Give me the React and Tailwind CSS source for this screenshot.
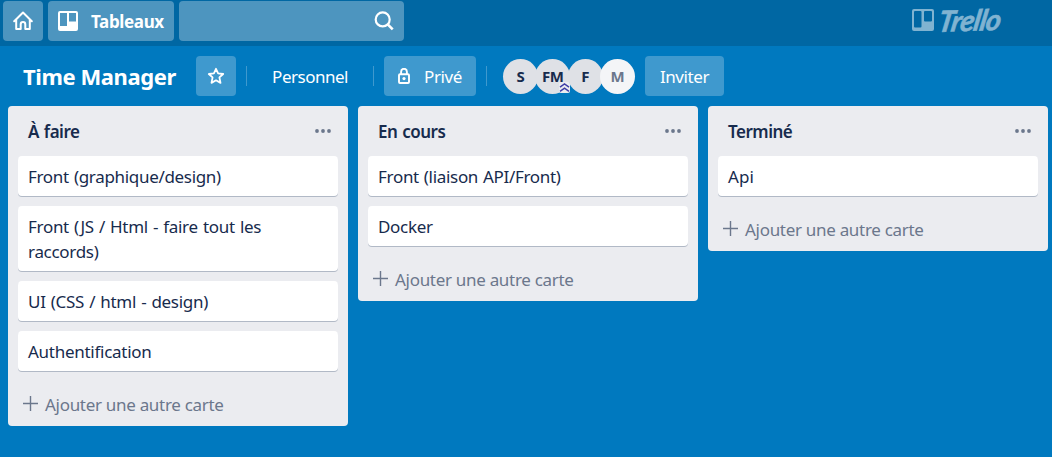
import React from "react";

const lists = [
  {
    title: "À faire",
    cards: [
      { text: "Front (graphique/design)", spacing: "tracking-[-0.32px] [word-spacing:1px]" },
      { text: "Front (JS / Html - faire tout les raccords)", spacing: "tracking-[-0.3px] [word-spacing:1px]" },
      { text: "UI (CSS / html - design)", spacing: "tracking-[-0.3px] [word-spacing:1px]" },
      { text: "Authentification", spacing: "tracking-[-0.27px]" },
    ],
  },
  {
    title: "En cours",
    cards: [
      { text: "Front (liaison API/Front)", spacing: "tracking-[-0.3px] [word-spacing:0.7px]" },
      { text: "Docker", spacing: "tracking-[-0.3px]" },
    ],
  },
  { title: "Terminé", cards: [{ text: "Api", spacing: "tracking-[0.1px]" }] },
];

function HomeIcon() {
  return (
    <svg width="20" height="20" viewBox="0 0 20 20" fill="none" stroke="white" strokeWidth="2" strokeLinejoin="round" strokeLinecap="round">
      <path d="M1.2 10.2 10 1.5l8.8 8.7M3.2 8.7v9.2h4.5v-4.5a2.3 2.3 0 0 1 4.6 0v4.5h4.5V8.7" />
    </svg>
  );
}

function BoardIcon() {
  return (
    <svg className="mr-[13px] h-5 w-5 shrink-0" viewBox="0 0 20 20" fill="white">
      <path fillRule="evenodd" d="M2 0h16a2 2 0 0 1 2 2v16a2 2 0 0 1-2 2H2a2 2 0 0 1-2-2V2a2 2 0 0 1 2-2ZM2 2v13h7V2ZM11 2v8.5h7V2Z" />
    </svg>
  );
}

function LogoMark() {
  return (
    <svg className="mb-0.5 h-[22px] w-[22px] shrink-0" viewBox="0 0 22 22" fill="#80b3d1">
      <path fillRule="evenodd" d="M2 0h18a2 2 0 0 1 2 2v18a2 2 0 0 1-2 2H2a2 2 0 0 1-2-2V2a2 2 0 0 1 2-2ZM3 2a1 1 0 0 0-1 1v14.5a1 1 0 0 0 1 1h5.5a1 1 0 0 0 1-1V3a1 1 0 0 0-1-1ZM13 2a1 1 0 0 0-1 1v8.5a1 1 0 0 0 1 1h6a1 1 0 0 0 1-1V3a1 1 0 0 0-1-1Z" />
    </svg>
  );
}

function SearchIcon() {
  return (
    <svg width="20" height="20" viewBox="0 0 20 20" fill="none" stroke="white" strokeWidth="2.2">
      <circle cx="8.7" cy="8.4" r="7" />
      <path d="m13.7 13.4 5 5" strokeWidth="2.6" />
    </svg>
  );
}

function StarIcon() {
  return (
    <svg width="18" height="18" viewBox="0 0 18 18" fill="none" stroke="white" strokeWidth="1.8" strokeLinejoin="round">
      <path d="m9 1.8 2.1 4.6 5.1.6-3.8 3.4 1.1 5.5L9 13.3l-4.5 2.6 1.1-5.5L1.8 7l5.1-.6Z" />
    </svg>
  );
}

function LockIcon() {
  return (
    <svg width="12" height="16" viewBox="0 0 12 16" fill="none" stroke="white" strokeWidth="1.9">
      <rect x="1" y="6.2" width="10" height="8.8" rx="1" />
      <path d="M3.1 6V3.7a2.9 2.9 0 0 1 5.8 0V6" />
      <circle cx="6" cy="10.6" r="1.6" fill="white" stroke="none" />
    </svg>
  );
}

function Divider({ className }) {
  return <div className={`h-5 w-px shrink-0 bg-[#3f99ce] ${className}`} />;
}

function Avatar({ initials, className = "bg-[#dfe1e6] text-[#172b4d]", children }) {
  return (
    <div className={`relative -mr-[2.7px] flex h-[35px] w-[35px] shrink-0 items-center justify-center rounded-full pt-px text-[15px] font-bold tracking-[-0.3px] ${className}`}>
      {initials}
      {children}
    </div>
  );
}

function List({ title, cards }) {
  return (
    <section className="w-[340px] shrink-0 rounded-[4px] bg-[#ebecf0] px-2.5 pb-[3px]">
      <header className="flex h-[50px] items-center justify-between pr-[7px] pl-2.5">
        <h2 className="pt-0.5 text-[17px] font-semibold tracking-[-0.5px] [word-spacing:1px]">{title}</h2>
        <svg width="16" height="4" viewBox="0 0 16 4" fill="#6b778c">
          <circle cx="2" cy="2" r="1.9" />
          <circle cx="8" cy="2" r="1.9" />
          <circle cx="14" cy="2" r="1.9" />
        </svg>
      </header>
      <div className="flex flex-col gap-2.5">
        {cards.map((card) => (
          <article key={card.text} className={`rounded-[4px] bg-white px-2.5 pt-2 pb-[7px] text-[17px] leading-[25px] shadow-[0_1px_0_#b1b9c6] ${card.spacing}`}>
            {card.text}
          </article>
        ))}
      </div>
      <button className="mt-[15px] flex h-[37px] items-center pl-[5px] text-[17px] tracking-[-0.3px] text-[#6b778c]">
        <svg className="mr-[7px] mb-[3px]" width="15" height="15" viewBox="0 0 15 15" stroke="#6b778c" strokeWidth="1.4">
          <path d="M7.5 0v15M0 7.5h15" />
        </svg>
        Ajouter une autre carte
      </button>
    </section>
  );
}

export default function App() {
  return (
    <div className="flex h-[457px] w-[1052px] flex-col overflow-hidden bg-[#0079bf] font-['Noto_Sans',sans-serif] text-[#172b4d]">
      <nav className="flex h-[46px] shrink-0 items-start gap-[5px] bg-[#0067a3] pt-px pl-[3px] text-white">
        <button className="flex h-10 w-10 items-center justify-center rounded-[4px] bg-[#4d95bf]">
          <HomeIcon />
        </button>
        <button className="flex h-10 w-[126px] items-center rounded-[4px] bg-[#4d95bf] pl-2.5 text-[17px] font-bold tracking-[-0.35px]">
          <BoardIcon />
          <span className="pt-0.5">Tableaux</span>
        </button>
        <div className="flex h-10 w-[225px] items-center justify-end rounded-[4px] bg-[#4d95bf] pr-2.5">
          <SearchIcon />
        </div>
        <div className="mt-1 ml-[503px] flex h-8 items-center gap-[5px] text-[#80b3d1]">
          <LogoMark />
          <span className="origin-left -rotate-2 -skew-x-12 font-['Lato',sans-serif] text-[29px] leading-8 font-bold tracking-[-0.8px] italic [-webkit-text-stroke:0.6px_#80b3d1]">Trello</span>
        </div>
      </nav>

      <div className="flex h-[60px] shrink-0 items-center pl-[23px] text-[17px] text-white">
        <h1 className="w-[173px] shrink-0 text-[22px] font-bold tracking-[-0.42px] whitespace-nowrap">Time Manager</h1>
        <button className="flex h-10 w-10 items-center justify-center rounded-[4px] bg-[#3f99ce]">
          <StarIcon />
        </button>
        <Divider className="ml-2.5" />
        <span className="w-[126px] pt-px text-center tracking-[-0.5px]">Personnel</span>
        <Divider />
        <button className="ml-2.5 flex h-10 w-[92px] items-center rounded-[4px] bg-[#3f99ce] pl-3.5 tracking-[-0.4px]">
          <LockIcon />
          <span className="ml-3.5 pt-0.5">Privé</span>
        </button>
        <Divider className="ml-2.5" />
        <div className="ml-4 flex w-[142px]">
          <Avatar initials="S" />
          <Avatar initials="FM">
            <svg className="absolute right-0 bottom-px z-10" width="11" height="11" viewBox="0 0 11 11" fill="none" stroke="#403fa8" strokeWidth="1.5">
              <rect width="11" height="11" rx="2" fill="#ebecf0" stroke="none" />
              <path d="M1 5.2 5.5 2 10 5.2M1 9.4l4.5-3.2L10 9.4" />
            </svg>
          </Avatar>
          <Avatar initials="F" />
          <Avatar initials="M" className="bg-[#f4f5f7] text-[#6b778c]" />
        </div>
        <button className="h-10 w-[79px] rounded-[4px] bg-[#3f99ce] pt-px tracking-[-0.4px]">Inviter</button>
      </div>

      <main className="flex items-start gap-2.5 pl-2">
        {lists.map((list) => (
          <List key={list.title} {...list} />
        ))}
      </main>
    </div>
  );
}
